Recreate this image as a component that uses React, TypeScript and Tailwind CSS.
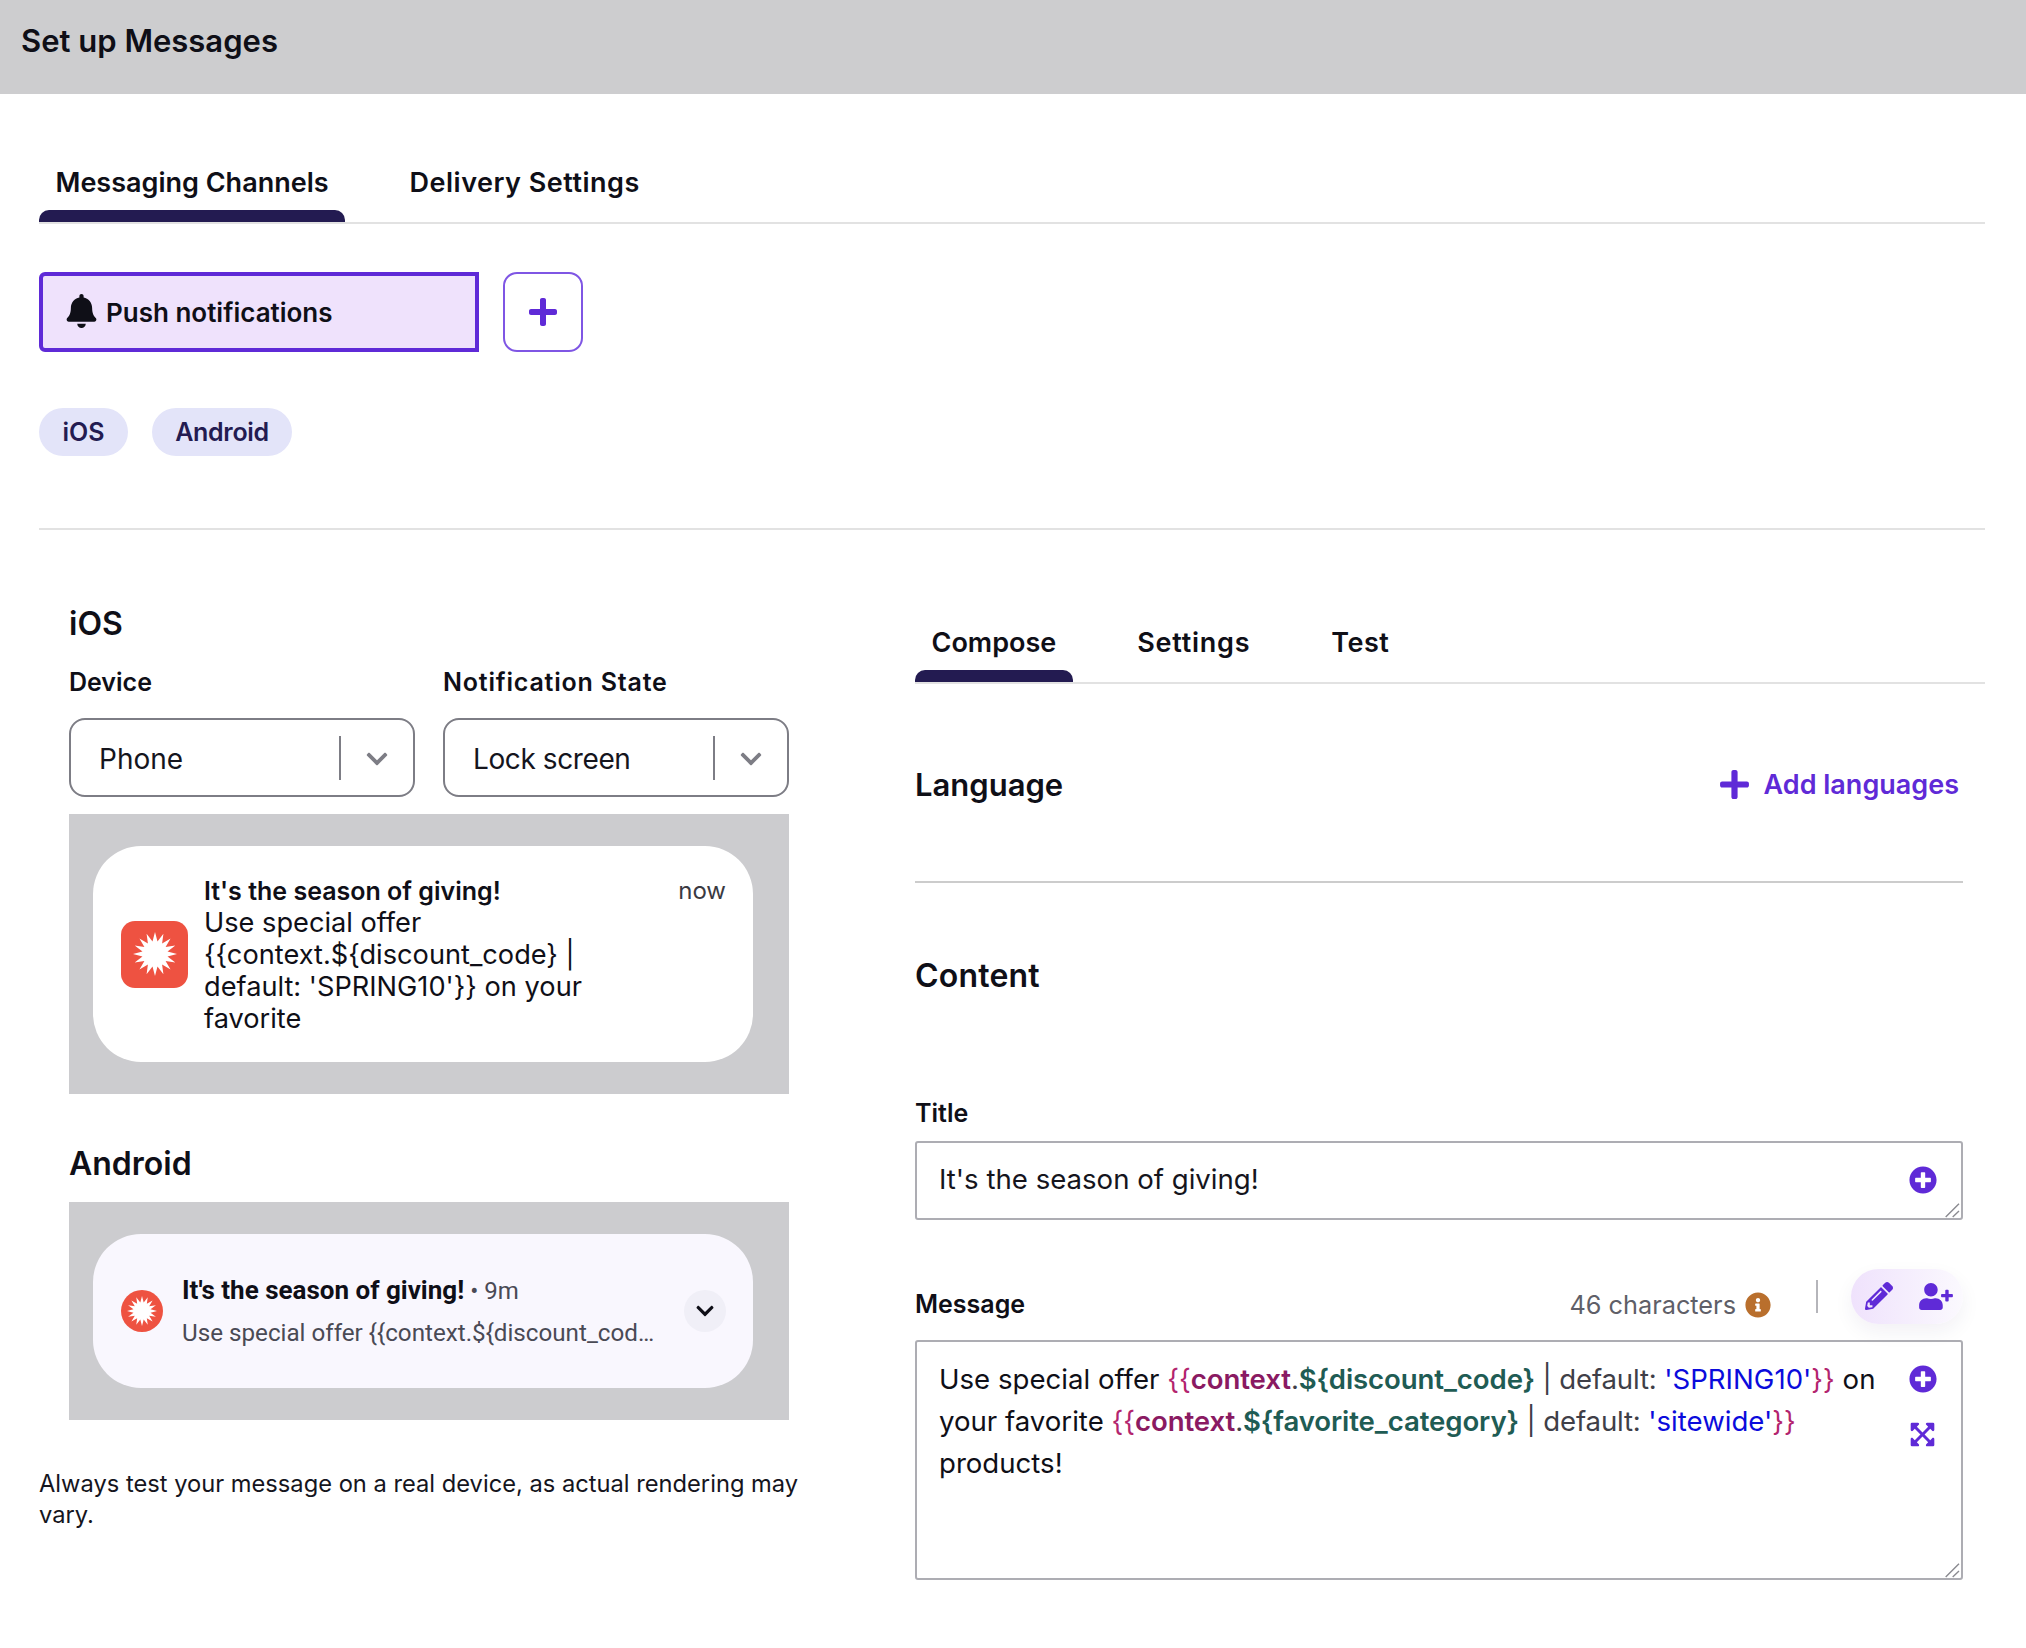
import React from "react";
import { FaBell, FaPlus, FaPlusCircle, FaPencilAlt, FaUserPlus, FaInfoCircle, FaExpandArrowsAlt, FaChevronDown } from "react-icons/fa";

function burst(cx: number, cy: number, r1: number, r2: number, n: number) {
  const pts: string[] = [];
  for (let i = 0; i < n * 2; i++) {
    const a = (Math.PI * i) / n - Math.PI / 2;
    const r = i % 2 === 0 ? r1 : r2;
    pts.push(`${(cx + r * Math.cos(a)).toFixed(2)},${(cy + r * Math.sin(a)).toFixed(2)}`);
  }
  return pts.join(" ");
}

function Burst({ className }: { className: string }) {
  return (
    <svg viewBox="0 0 100 100" className={className}>
      <polygon points={burst(50, 50, 50, 29, 16)} fill="#fff" />
    </svg>
  );
}

function Grip() {
  return (
    <svg viewBox="0 0 16 16" className="absolute bottom-0 right-[1px] h-[16px] w-[16px]" fill="none" stroke="#8a8a90" strokeWidth="1.4">
      <path d="M1.7 15 15 1.7M8.7 15 15 9" />
    </svg>
  );
}

function Tab({ label, active, track }: { label: string; active?: boolean; track?: string }) {
  return (
    <div className="flex flex-col">
      <div className={`h-[50px] px-[16.5px] pt-[1px] text-[27px] leading-[44px] font-semibold text-[#0f0f17] ${track ?? ""}`}>{label}</div>
      <div className={active ? "h-[12px] rounded-t-[10px] bg-[#231b51]" : "h-[12px]"} />
    </div>
  );
}

function Select({ value, track }: { value: string; track?: string }) {
  return (
    <div className="flex h-[79px] w-[346px] items-center rounded-[16px] border-2 border-[#7d7d85] bg-white">
      <div className={`flex-1 pl-[28px] pt-[2px] text-[28px] text-[#15151d] ${track ?? ""}`}>{value}</div>
      <div className="h-[44px] w-[2px] bg-[#7d7d85]" />
      <div className="flex w-[72px] justify-center pt-[2px] text-[#7d7d85]">
        <FaChevronDown className="h-[24px] w-[28px]" />
      </div>
    </div>
  );
}

const Pink = ({ children }: { children: React.ReactNode }) => <span className="text-[#b3246e]">{children}</span>;
const Ctx = ({ children }: { children: React.ReactNode }) => <span className="font-semibold tracking-[-0.1px] text-[#8a1a62]">{children}</span>;
const Var = ({ children }: { children: React.ReactNode }) => <span className="font-semibold tracking-[-0.1px] text-[#1f5c54]">{children}</span>;
const Gray = ({ children }: { children: React.ReactNode }) => <span className="tracking-[-0.15px] text-[#3f3f48]">{children}</span>;
const Blue = ({ children }: { children: React.ReactNode }) => <span className="text-[#0b0bdc]">{children}</span>;

export default function App() {
  return (
    <div className="min-h-[1648px] bg-white font-['Inter',sans-serif] text-[#0f0f17]">
      <div className="flex h-[94px] items-center bg-[#cdcdcf] pb-[11px] pl-[21px] text-[31px] font-semibold">Set up Messages</div>

      <div className="pl-[39px] pr-[41px]">
        <div className="mt-[66px] flex gap-[48px] border-b-2 border-[#e2e2e2]">
          <Tab label="Messaging Channels" active />
          <Tab label="Delivery Settings" track="tracking-[0.5px]" />
        </div>

        <div className="mt-[48px] flex gap-[24px]">
          <div className="flex h-[80px] w-[440px] items-center rounded-l-[6px] border-[4px] border-[#5f2ad7] bg-[#efe2fc] pl-[23px] text-[26px] font-semibold">
            <FaBell className="mb-[2px] mr-[9px] h-[34px] w-[31px] text-[#0f0f17]" />
            Push notifications
          </div>
          <div className="flex h-[80px] w-[80px] items-center justify-center rounded-[14px] border-2 border-[#7f56e4] text-[#5f2ad7]">
            <FaPlus className="h-[32px] w-[32px]" />
          </div>
        </div>

        <div className="mt-[56px] flex gap-[24px]">
          <div className="flex h-[48px] w-[89px] items-center justify-center rounded-full bg-[#e3e4f9] pt-[2px] text-[25px] font-semibold text-[#231b51]">iOS</div>
          <div className="flex h-[48px] w-[140px] items-center justify-center rounded-full bg-[#e3e4f9] pt-[2px] text-[25px] font-semibold tracking-[-0.3px] text-[#231b51]">Android</div>
        </div>

        <div className="mt-[72px] h-[2px] bg-[#e2e2e2]" />

        <div className="flex">
          <div className="w-[770px] shrink-0">
            <div className="pl-[30px]">
              <div className="mt-[74px] text-[32px] font-semibold leading-[40px]">iOS</div>
              <div className="mt-[22px] flex gap-[28px]">
                <div className="w-[346px]">
                  <div className="text-[25px] font-semibold leading-[32px]">Device</div>
                  <div className="mt-[20px]"><Select value="Phone" /></div>
                </div>
                <div className="w-[346px]">
                  <div className="text-[25px] font-semibold leading-[32px] tracking-[0.8px]">Notification State</div>
                  <div className="mt-[20px]"><Select value="Lock screen" track="tracking-[-0.4px]" /></div>
                </div>
              </div>

              <div className="mt-[17px] h-[280px] w-[720px] bg-[#cccccf] pl-[24px] pr-[36px] pt-[32px]">
                <div className="flex h-[216px] items-center rounded-[48px] bg-white pl-[28px] pr-[27px]">
                  <div className="flex h-[67px] w-[67px] shrink-0 items-center justify-center rounded-[14px] bg-[#ee5241]">
                    <Burst className="h-[44px] w-[44px]" />
                  </div>
                  <div className="ml-[16px] flex-1 pt-[1px]">
                    <div className="flex justify-between text-[25px] leading-[32px]">
                      <span className="font-semibold">It's the season of giving!</span>
                      <span className="text-[24px] text-[#3a3a42]">now</span>
                    </div>
                    <div className="w-[420px] text-[27.2px] leading-[32px]">
                      Use special offer {"{{context.${discount_code}"} | default: 'SPRING10'{"}}"} on your favorite
                    </div>
                  </div>
                </div>
              </div>

              <div className="mt-[50px] text-[32px] font-semibold leading-[40px]">Android</div>
              <div className="mt-[18px] h-[218px] w-[720px] bg-[#cccccf] pl-[24px] pr-[36px] pt-[32px]">
                <div className="flex h-[154px] items-center rounded-[48px] bg-[#f9f7fe] pl-[28px] pr-[27px]">
                  <div className="flex h-[42px] w-[42px] shrink-0 items-center justify-center rounded-full bg-[#ee5241]">
                    <Burst className="h-[30px] w-[30px]" />
                  </div>
                  <div className="ml-[19px] w-[480px] font-['Roboto',sans-serif]">
                    <div className="text-[26px] leading-[32px]">
                      <span className="font-bold">It's the season of giving!</span>
                      <span className="text-[24px] text-[#4a4a55]"> • 9m</span>
                    </div>
                    <div className="mt-[10px] truncate text-[24.2px] leading-[32px] text-[#4a4a55]">
                      Use special offer {"{{context.${discount_code} | default: 'SPRING10'}} on your favorite"}
                    </div>
                  </div>
                  <div className="ml-auto flex h-[42px] w-[42px] items-center justify-center rounded-full bg-[#f0eff7]">
                    <FaChevronDown className="h-[20px] w-[24px]" />
                  </div>
                </div>
              </div>
            </div>

            <div className="mt-[48px] text-[23.7px] leading-[31px] text-[#15151d]">
              Always test your message on a real device, as actual rendering may vary.
            </div>
          </div>

          <div className="ml-[106px] flex-1">
            <div className="mt-[90px] flex gap-[48px] border-b-2 border-[#e2e2e2]">
              <Tab label="Compose" active />
              <Tab label="Settings" track="tracking-[0.75px]" />
              <Tab label="Test" track="tracking-[0.5px]" />
            </div>

            <div className="w-[1048px]">
              <div className="mt-[80px] flex items-center justify-between">
                <div className="mt-[1px] text-[31px] font-semibold leading-[40px]">Language</div>
                <div className="mr-[4px] flex items-center gap-[13px] pt-[1px] text-[27px] font-semibold text-[#5f2ad7]">
                  <FaPlus className="mb-[2px] h-[33px] w-[33px]" />
                  Add languages
                </div>
              </div>

              <div className="mt-[75px] h-[2px] bg-[#cccccc]" />

              <div className="mt-[73px] text-[32px] font-semibold leading-[40px] tracking-[0.2px]">Content</div>

              <div className="mt-[101px] text-[25px] font-semibold leading-[32px]">Title</div>
              <div className="relative mt-[12px] h-[79px] rounded-[3px] border-2 border-[#adadb3] pl-[22px] text-[27.6px] leading-[73px] text-[#15151d]">
                It's the season of giving!
                <FaPlusCircle className="absolute right-[24px] top-[23px] h-[28px] w-[28px] text-[#5f2ad7]" />
                <Grip />
              </div>

              <div className="mt-[49px] flex h-[55px] items-end">
                <div className="pb-[4px] text-[25px] font-semibold leading-[32px]">Message</div>
                <div className="ml-auto flex items-center gap-[9px] pb-[3px] text-[25.3px] leading-[32px] text-[#5f5f68]">
                  46 characters
                  <FaInfoCircle className="h-[26px] w-[26px] text-[#b96f2d]" />
                </div>
                <div className="mb-[11px] ml-[45px] h-[33px] w-[2px] bg-[#b5b5ba]" />
                <div className="ml-[33px] flex h-[55px] w-[112px] items-center rounded-full bg-gradient-to-r from-[#efe2fc] to-[#fbf9fe] pl-[14px] text-[#5f2ad7] shadow-[0_8px_20px_rgba(30,20,80,0.06)]">
                  <FaPencilAlt className="h-[28px] w-[28px]" />
                  <FaUserPlus className="ml-[26px] h-[27px] w-[34px]" />
                </div>
              </div>

              <div className="relative mt-[16px] h-[240px] rounded-[3px] border-2 border-[#adadb3] pb-[16px] pl-[22px] pr-[67px] pt-[16px] text-[27.6px] leading-[42px]">
                Use special offer <Pink>{"{{"}</Pink><Ctx>context</Ctx><Gray>.</Gray><Var>{"${discount_code}"}</Var><Gray> | default: </Gray><Blue>'SPRING10'</Blue><Pink>{"}}"}</Pink> on your favorite <Pink>{"{{"}</Pink><Ctx>context</Ctx><Gray>.</Gray><Var>{"${favorite_category}"}</Var><Gray> | default: </Gray><Blue>'sitewide'</Blue><Pink>{"}}"}</Pink> products!
                <FaPlusCircle className="absolute right-[24px] top-[23px] h-[28px] w-[28px] text-[#5f2ad7]" />
                <FaExpandArrowsAlt className="absolute right-[25px] top-[79px] h-[27px] w-[27px] text-[#5f2ad7]" />
                <Grip />
              </div>
            </div>
          </div>
        </div>
      </div>
    </div>
  );
}
